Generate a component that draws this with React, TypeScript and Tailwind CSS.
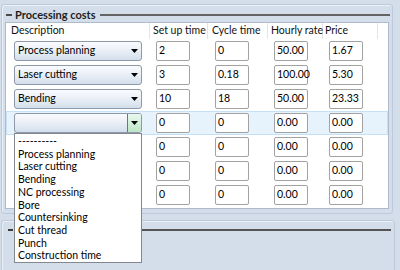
import React from "react";

const options = [
  "----------",
  "Process planning",
  "Laser cutting",
  "Bending",
  "NC processing",
  "Bore",
  "Countersinking",
  "Cut thread",
  "Punch",
  "Construction time",
];

type Row = {
  desc: string;
  setup: string;
  cycle: string;
  rate: string;
  price: string;
  active?: boolean;
};

const rows: Row[] = [
  { desc: "Process planning", setup: "2", cycle: "0", rate: "50.00", price: "1.67" },
  { desc: "Laser cutting", setup: "3", cycle: "0.18", rate: "100.00", price: "5.30" },
  { desc: "Bending", setup: "10", cycle: "18", rate: "50.00", price: "23.33" },
  { desc: "", setup: "0", cycle: "0", rate: "0.00", price: "0.00", active: true },
  { desc: "", setup: "0", cycle: "0", rate: "0.00", price: "0.00" },
  { desc: "", setup: "0", cycle: "0", rate: "0.00", price: "0.00" },
  { desc: "", setup: "0", cycle: "0", rate: "0.00", price: "0.00" },
];

const headers = [
  { label: "Description", pad: "pl-[5px]" },
  { label: "Set up time", pad: "pl-[3px]" },
  { label: "Cycle time", pad: "pl-[4px]" },
  { label: "Hourly rate", pad: "pl-[3px]" },
  { label: "Price", pad: "pl-[2px]" },
];

function Arrow() {
  return (
    <svg width="7" height="4" viewBox="0 0 7 4">
      <path d="M0 0 H7 L3.5 4 Z" fill="#000" />
    </svg>
  );
}

function Combo({ value, active }: { value: string; active?: boolean }) {
  return (
    <div className="ml-[8px] w-[128px] h-[20px] flex items-stretch rounded-[3px] border border-[#8e9aab] bg-linear-to-b from-[#fafbfd] via-[#e9eff7] to-[#d3deeb] overflow-hidden">
      <div className="flex-1 flex items-center pl-[3px] whitespace-nowrap">{value}</div>
      {active ? (
        <div className="w-[14px] flex items-center justify-center border-l border-[#e0454a] bg-linear-to-b from-[#eaf8ee] to-[#bde5c6]">
          <Arrow />
        </div>
      ) : (
        <div className="w-[14px] flex items-center justify-center">
          <Arrow />
        </div>
      )}
    </div>
  );
}

function Box({ value, ml }: { value: string; ml: string }) {
  return (
    <div className={`${ml} w-[34px] h-[20px] flex items-center pl-[2px] bg-white border border-[#a2a2a2] rounded-[2px]`}>
      {value}
    </div>
  );
}

function GroupHeader({ title, pt }: { title: string; pt: string }) {
  return (
    <div className={`h-[17px] ${pt} flex items-center`}>
      <span className="ml-[4px] w-[6px] h-[2px] bg-[#4a4a4a]" />
      <span className="ml-[3px] font-bold text-[11px] text-[#1e1e1e]">{title}</span>
      <span className="ml-[4px] mr-[2px] flex-1 h-[2px] bg-[#646464]" />
    </div>
  );
}

export default function App() {
  return (
    <div
      className="w-[400px] h-[270px] overflow-hidden relative bg-[#d4deea] text-[10.5px] text-black"
      style={{ fontFamily: "Lato, 'Noto Sans', sans-serif" }}
    >
      <div className="ml-[1px] mt-[4px] w-[392px] h-[210px] rounded-[3px] border border-[#bccadb] shadow-[inset_1px_1px_0_#e9eff6]">
        <GroupHeader title="Processing costs" pt="pt-[3px]" />
        <div className="ml-[3px] w-[384px] h-[187px] bg-white border border-[#aebbcc]">
          <div className="h-[16px] grid grid-cols-[144px_58px_60px_55px_55px_1fr]">
            {headers.map((h) => (
              <div key={h.label} className={`flex items-center ${h.pad} border-r border-[#e4e4e4] whitespace-nowrap text-[#111]`}>
                {h.label}
              </div>
            ))}
            <div />
          </div>
          {rows.map((r, i) => (
            <div
              key={i}
              className={`h-[24px] grid grid-cols-[144px_58px_60px_55px_55px_1fr] items-center ${
                r.active ? "bg-[#e7f3fc] shadow-[inset_0_0_0_1px_#c6e1f5]" : ""
              }`}
            >
              <Combo value={r.desc} active={r.active} />
              <Box value={r.setup} ml="ml-[6px]" />
              <Box value={r.cycle} ml="ml-[7px]" />
              <Box value={r.rate} ml="ml-[6px]" />
              <Box value={r.price} ml="ml-[6px]" />
              <div />
            </div>
          ))}
        </div>
      </div>

      <div className="ml-[1px] mt-[6px] w-[394px] h-[60px] rounded-[3px] border border-[#bccadb] shadow-[inset_1px_1px_0_#e9eff6]">
        <div className="h-[17px] pt-[1px] flex items-center">
          <span className="ml-[6px] w-[5px] h-[1.5px] bg-[#3c3c3c]" />
          <span className="ml-[3px] mr-[3px] flex-1 h-[1.5px] bg-[#555]" />
        </div>
      </div>

      <div className="absolute left-[14px] top-[133px] w-[128px] h-[130px] bg-white border border-[#828790] pl-[3px] pt-[1px] leading-[12.7px]">
        {options.map((o) => (
          <div key={o} className="whitespace-nowrap">
            {o}
          </div>
        ))}
      </div>
    </div>
  );
}
